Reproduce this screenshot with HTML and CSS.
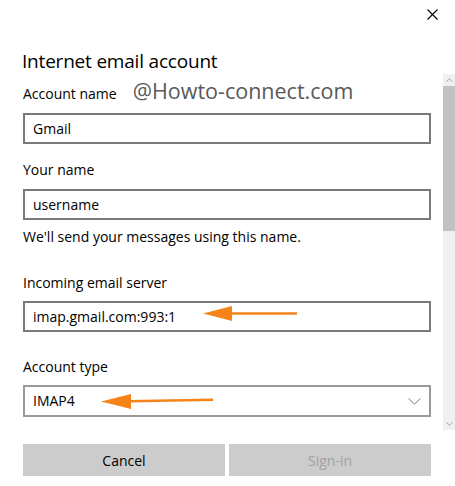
FILE: index.html
```html
<!DOCTYPE html>
<html lang="en">
<head>
<meta charset="utf-8">
<title>Internet email account</title>
<link rel="stylesheet" href="styles.css">
</head>
<body>
<div class="dialog">
  <div class="topbar">
    <button class="close" aria-label="Close">
      <svg width="11" height="11" viewBox="0 0 11 11"><path d="M0.5 0.5 L10.5 10.5 M10.5 0.5 L0.5 10.5" stroke="#000" stroke-width="1.1" fill="none"/></svg>
    </button>
  </div>
  <h1 class="title">Internet email account</h1>
  <div class="body">
    <div class="form">
      <div class="label first">Account name<span class="watermark">@Howto-connect.com</span></div>
      <div class="field">Gmail</div>

      <div class="label gap">Your name</div>
      <div class="field">username</div>
      <div class="hint">We'll send your messages using this name.</div>

      <div class="label section">Incoming email server</div>
      <div class="field annotated">imap.gmail.com:993:1
        <svg class="arrow arrow-server" width="95" height="15" viewBox="0 0 95 15"><path d="M28 6.3 L94 6.3 L94 8.7 L28 8.7 Z" fill="#f5831a"/><path d="M0 7.5 L29 0 L29 15 Z" fill="#f5831a"/></svg>
      </div>

      <div class="label section2">Account type</div>
      <div class="field select annotated">IMAP4
        <svg class="arrow arrow-type" width="113" height="16" viewBox="0 0 113 16"><path d="M28 7 L112 5.6 L112 8.1 L28 9.4 Z" fill="#f5831a"/><path d="M0 8.5 L30 1 L30 16 Z" fill="#f5831a"/></svg>
        <svg class="chevron" width="13" height="7" viewBox="0 0 13 7"><path d="M0.5 0.5 L6.5 6 L12.5 0.5" stroke="#7a7a7a" stroke-width="1" fill="none"/></svg>
      </div>
    </div>
    <div class="scrollbar">
      <div class="sb-btn"><svg width="7" height="4" viewBox="0 0 7 4"><path d="M0.5 3.5 L3.5 0.8 L6.5 3.5" stroke="#a6a6a6" stroke-width="1" fill="none"/></svg></div>
      <div class="sb-thumb"></div>
      <div class="sb-track"></div>
      <div class="sb-btn"><svg width="7" height="4" viewBox="0 0 7 4"><path d="M0.5 0.5 L3.5 3.2 L6.5 0.5" stroke="#a6a6a6" stroke-width="1" fill="none"/></svg></div>
    </div>
  </div>
  <div class="actions">
    <button class="btn">Cancel</button>
    <button class="btn disabled">Sign-in</button>
  </div>
</div>
</body>
</html>
```
FILE: styles.css
```css
* { box-sizing: border-box; }
html, body {
  margin: 0;
  padding: 0;
  background: #ffffff;
}
body {
  font-family: "Open Sans", "Noto Sans", sans-serif;
  color: #000;
}
.dialog {
  width: 455px;
  height: 486px;
  display: flex;
  flex-direction: column;
}
.topbar {
  height: 48px;
  display: flex;
  justify-content: flex-end;
  align-items: flex-start;
}
.close {
  border: 0;
  background: none;
  padding: 0;
  margin: 9px 17px 0 0;
  width: 11px;
  height: 11px;
  display: block;
}
.close svg { display: block; }
.title {
  margin: 0;
  padding-left: 22px;
  font-size: 19px;
  font-weight: 400;
  line-height: 26px;
  height: 26px;
  letter-spacing: -0.2px;
}
.body {
  display: flex;
  height: 356px;
}
.form {
  width: 443px;
  padding-left: 23px;
  padding-right: 12px;
}
.label {
  font-size: 14px;
  line-height: 20px;
  color: #000;
}
.label.first { margin-top: 10px; }
.label.gap { margin-top: 16px; }
.label.section { margin-top: 26px; }
.label.section2 { margin-top: 25px; }
.watermark {
  font-size: 21.5px;
  line-height: 0;
  color: #595959;
  margin-left: 16px;
}
.field {
  position: relative;
  margin-top: 9px;
  height: 31px;
  border: 2px solid #7a7a7a;
  padding: 0 8px;
  font-size: 14px;
  line-height: 27px;
}
.label + .field { margin-top: 8px; }
.label.first + .field { margin-top: 9px; }
.label.gap + .field { margin-top: 9px; }
.field.select {
  height: 32px;
  line-height: 28px;
  border-color: #999;
}
.hint {
  margin-top: 7px;
  font-size: 14px;
  line-height: 20px;
}
.arrow {
  position: absolute;
  display: block;
}
.arrow-server { left: 178px; top: 3px; }
.arrow-type { left: 76px; top: 6px; }
.chevron {
  position: absolute;
  right: 8px;
  top: 11px;
  display: block;
}
.scrollbar {
  width: 12px;
  display: flex;
  flex-direction: column;
  background: #f0f0f0;
}
.sb-btn {
  height: 12px;
  display: flex;
  align-items: center;
  justify-content: center;
}
.sb-btn svg { display: block; }
.sb-thumb {
  height: 145px;
  background: #c2c2c2;
}
.sb-track { flex: 1; }
.actions {
  margin-top: 14px;
  padding-left: 23px;
  display: flex;
  gap: 4px;
}
.btn {
  width: 202px;
  height: 32px;
  border: 0;
  background: #cccccc;
  font-family: "Open Sans", "Noto Sans", sans-serif;
  font-size: 14px;
  color: #000;
  padding: 0;
}
.btn.disabled { color: #a3a3a3; }
```
